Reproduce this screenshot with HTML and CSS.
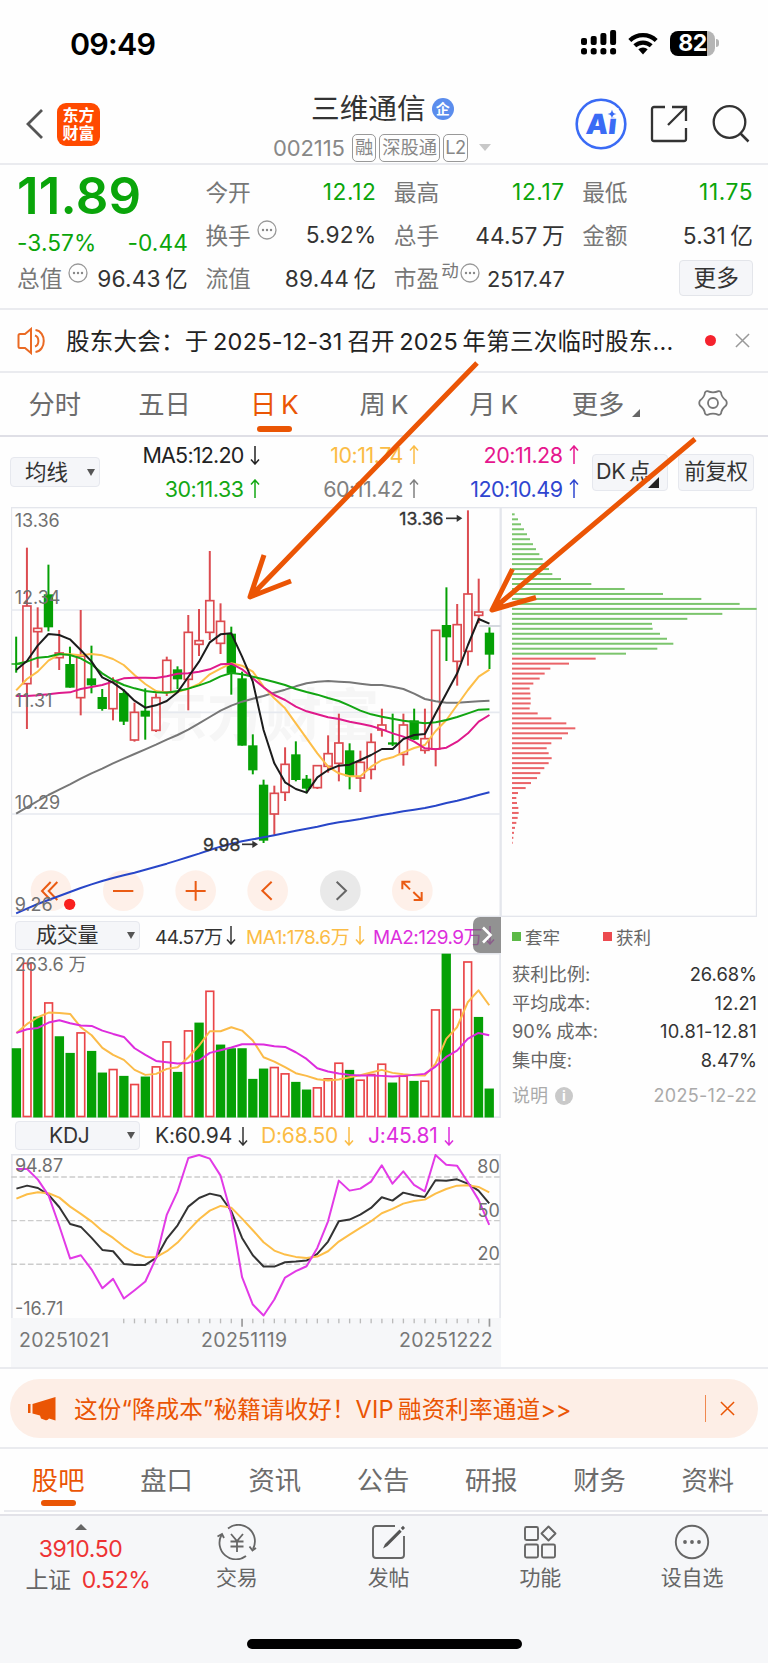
FILE: index.html
```html
<!DOCTYPE html>
<html lang="zh-CN">

<head>
    <meta charset="UTF-8">
    <meta name="viewport" content="width=device-width, initial-scale=1.0">
    <title>三维通信 002115</title>
    <link rel="stylesheet" href="styles.css">
</head>

<body>

    <!-- Shared icons -->
    <svg class="defs" width="0" height="0">
        <symbol id="down" viewBox="0 0 10 20"><path d="M5 1v18M1 14.500l4 4.500 4-4.500" fill="none" stroke="currentColor" stroke-width="1.500"/></symbol>
        <symbol id="up" viewBox="0 0 10 20"><path d="M5 19V1M1 5.500l4-4.500 4 4.500" fill="none" stroke="currentColor" stroke-width="1.500"/></symbol>
        <symbol id="more" viewBox="0 0 20 20"><circle cx="10" cy="10" r="9" fill="none" stroke="#999" stroke-width="1.300"/><g fill="#888"><circle cx="6" cy="10" r="1.200"/><circle cx="10" cy="10" r="1.200"/><circle cx="14" cy="10" r="1.200"/></g></symbol>
        <symbol id="close" viewBox="0 0 16 16"><path d="M1 1l14 14M15 1L1 15" fill="none" stroke="currentColor" stroke-width="1.600"/></symbol>
    </svg>

    <div class="page">

        <!-- Status bar -->
        <div class="status">
            <span class="time">09:49</span>
            <div class="status-icons">
                <svg width="36" height="26" viewBox="0 0 36 26">
                    <rect x="0" y="8" width="6" height="7" rx="2"/>
                    <rect x="9.700" y="6" width="6" height="9" rx="2"/>
                    <rect x="19.400" y="3" width="6" height="12" rx="2"/>
                    <rect x="29.100" y="0" width="6" height="15" rx="2"/>
                    <rect x="0" y="18" width="6" height="6.500" rx="2.500"/>
                    <rect x="9.700" y="18" width="6" height="6.500" rx="2.500"/>
                    <rect x="19.400" y="18" width="6" height="6.500" rx="2.500"/>
                    <rect x="29.100" y="18" width="6" height="6.500" rx="2.500"/>
                </svg>
                <svg class="wifi" width="30" height="23" viewBox="0 0 30 23">
                    <g fill="none" stroke="#000" stroke-width="4.200">
                        <path d="M1.800 8.500a19 19 0 0 1 26.400 0"/>
                        <path d="M6.800 13.800a12 12 0 0 1 16.400 0"/>
                    </g>
                    <path d="M10.300 17.200a7 7 0 0 1 9.400 0L15 22.500z"/>
                </svg>
                <div class="battery"><span>82</span></div>
            </div>
        </div>

        <!-- Title bar -->
        <header class="header">
            <div class="header-left">
                <svg width="19" height="32" viewBox="0 0 19 32"><path d="M17 2L3 16l14 14" fill="none" stroke="#555" stroke-width="2.800"/></svg>
                <div class="logo">东方<br>财富</div>
            </div>
            <div class="header-title">
                <h1>三维通信<span class="badge">企</span></h1>
                <div class="code">
                    <span class="num">002115</span><span class="tag">融</span><span class="tag">深股通</span><span class="tag">L2</span><i class="caret"></i>
                </div>
            </div>
            <div class="header-right">
                <svg width="52" height="52" viewBox="0 0 52 52">
                    <circle cx="26" cy="26" r="24.300" fill="none" stroke="#3a6bf5" stroke-width="2.600"/>
                    <text x="14" y="36" class="ai" transform="skewX(-6)">Ai</text>
                    <rect x="31.500" y="10" width="12" height="9" fill="#fff"/>
                    <path d="M37 11.500c.8 3.200 1.600 3.900 4.500 4.500-2.900.6-3.700 1.300-4.500 4.500-.8-3.200-1.600-3.900-4.500-4.500 2.900-.6 3.700-1.300 4.500-4.500z" fill="#3a6bf5"/>
                </svg>
                <svg class="share" width="38" height="38" viewBox="0 0 38 38"><path d="M15 2H4a2 2 0 0 0-2 2v30a2 2 0 0 0 2 2h30a2 2 0 0 0 2-2V23M22 2h14v14M36 2L18 20" fill="none" stroke="#333" stroke-width="2.300"/></svg>
                <svg class="search" width="38" height="38" viewBox="0 0 38 38"><circle cx="17.500" cy="17" r="15.800" fill="none" stroke="#333" stroke-width="2.300"/><path d="M28 28l8.500 8.500" stroke="#333" stroke-width="2.500"/></svg>
            </div>
        </header>

        <!-- Quote -->
        <section class="quote">
            <div class="quote-main">
                <div class="price">11.89</div>
                <div class="change"><span>-3.57%</span><span>-0.44</span></div>
                <div class="cell"><label>总值<svg class="info"><use href="#more"/></svg></label><b>96.43&thinsp;亿</b></div>
            </div>
            <div class="quote-col">
                <div class="cell"><label>今开</label><b class="green">12.12</b></div>
                <div class="cell"><label>换手<svg class="info"><use href="#more"/></svg></label><b>5.92%</b></div>
                <div class="cell"><label>流值</label><b>89.44&thinsp;亿</b></div>
            </div>
            <div class="quote-col">
                <div class="cell"><label>最高</label><b class="green">12.17</b></div>
                <div class="cell"><label>总手</label><b>44.57&thinsp;万</b></div>
                <div class="cell pe"><label>市盈<sup>动</sup><svg class="info"><use href="#more"/></svg></label><b>2517.47</b></div>
            </div>
            <div class="quote-col">
                <div class="cell"><label>最低</label><b class="green">11.75</b></div>
                <div class="cell"><label>金额</label><b>5.31&thinsp;亿</b></div>
                <div class="cell"><button class="btn-more">更多</button></div>
            </div>
        </section>

        <!-- News line -->
        <section class="news">
            <svg width="31" height="28" viewBox="0 0 31 28"><g fill="none" stroke="#ea6a24" stroke-width="2"><path d="M14 2v24l-6-5H3a1.500 1.500 0 0 1-1.500-1.500v-11A1.500 1.500 0 0 1 3 7h5z"/><path d="M18 8.500c4.500 1.500 4.500 9.500 0 11M18.500 3c11 1.500 11 20.500 0 22"/></g></svg>
            <p>股东大会：于&thinsp;2025-12-31&thinsp;召开&thinsp;2025&thinsp;年第三次临时股东...</p>
            <i class="dot"></i>
            <svg class="x" width="15" height="15"><use href="#close"/></svg>
        </section>

        <!-- Period tabs -->
        <nav class="tabs">
            <span>分时</span>
            <span>五日</span>
            <span class="active">日&thinsp;K</span>
            <span>周&thinsp;K</span>
            <span>月&thinsp;K</span>
            <span>更多<i class="corner"></i></span>
            <span><svg width="30" height="28" viewBox="0 0 30 28"><path d="M9.500 2.200Q15 4.500 20.500 2.200Q22 1.800 23 3.500Q23.500 8 28 11.500Q29.500 14 28 16.500Q23.500 20 23 24.500Q22 26.200 20.500 25.800Q15 23.500 9.500 25.800Q8 26.200 7 24.500Q6.500 20 2 16.500Q.5 14 2 11.500Q6.500 8 7 3.500Q8 1.800 9.500 2.200z" fill="none" stroke="#777" stroke-width="1.800"/><circle cx="15" cy="14" r="5" fill="none" stroke="#777" stroke-width="1.800"/></svg></span>
        </nav>

        <!-- Moving averages -->
        <section class="averages">
            <div class="select ma-select">均线<i></i></div>
            <div class="ma-grid">
                <span class="c-black">MA5:12.20<svg class="arr"><use href="#down"/></svg></span>
                <span class="c-orange">10:11.74<svg class="arr"><use href="#up"/></svg></span>
                <span class="c-pink">20:11.28<svg class="arr"><use href="#up"/></svg></span>
                <span class="c-green">30:11.33<svg class="arr"><use href="#up"/></svg></span>
                <span class="c-gray">60:11.42<svg class="arr"><use href="#up"/></svg></span>
                <span class="c-blue">120:10.49<svg class="arr"><use href="#up"/></svg></span>
            </div>
            <div class="pill dk">DK&thinsp;点<i></i></div>
            <div class="pill">前复权</div>
        </section>

        <!-- Charts -->
        <section class="charts">
            <div class="charts-left">
                <svg id="kline" class="kline" viewBox="33 21 1470 1230"></svg>

                <div class="indicator">
                    <div class="select">成交量<i></i></div>
                    <span class="v1">44.57万<svg class="arr"><use href="#down"/></svg></span>
                    <span class="v2 c-orange">MA1:178.6万<svg class="arr"><use href="#down"/></svg></span>
                    <span class="v3 c-purple">MA2:129.9万<svg class="arr"><use href="#down"/></svg></span>
                    <div class="toggle"><svg width="12" height="18" viewBox="0 0 12 18"><path d="M2 1.500L9.500 9 2 16.500" fill="none" stroke="#fff" stroke-width="2.600"/></svg></div>
                </div>
                <svg id="volume" class="sub-chart" viewBox="33 127 1470 494"></svg>

                <div class="indicator kdj-line">
                    <div class="select">KDJ<i></i></div>
                    <span class="k1">K:60.94<svg class="arr"><use href="#down"/></svg></span>
                    <span class="k2 c-orange">D:68.50<svg class="arr"><use href="#down"/></svg></span>
                    <span class="k3 c-purple">J:45.81<svg class="arr"><use href="#down"/></svg></span>
                </div>
                <svg id="kdj" class="sub-chart" viewBox="33 128 1470 494"></svg>

                <div class="axis">
                    <svg id="ticks" viewBox="33 622 1470 30"></svg>
                    <div class="dates"><span>20251021</span><span>20251119</span><span>20251222</span></div>
                </div>
            </div>

            <div class="charts-right">
                <svg id="chips" class="chips" viewBox="3 21 768 1230"></svg>
                <div class="legend"><span><i class="sq-green"></i>套牢</span><span><i class="sq-red"></i>获利</span></div>
                <dl>
                    <dt>获利比例:</dt><dd>26.68%</dd>
                    <dt>平均成本:</dt><dd>12.21</dd>
                    <dt>90%&thinsp;成本:</dt><dd class="range">10.81-12.81</dd>
                    <dt>集中度:</dt><dd>8.47%</dd>
                </dl>
                <div class="note"><span>说明<i>i</i></span><span class="date">2025-12-22</span></div>
            </div>
        </section>

        <!-- Promo -->
        <section class="promo-wrap">
            <div class="promo">
                <svg width="28" height="24" viewBox="0 0 28 24"><path d="M0 7h2.500v9H0zM4.500 7L27.500 0v23.500L21 21.500q-1.500 2.500-4 1.500l-4-1.500-1-3-7.500-2z" fill="#ea5504"/></svg>
                <p>这份“降成本”秘籍请收好！VIP&thinsp;融资利率通道&gt;&gt;</p>
                <div class="promo-close"><svg width="15" height="15"><use href="#close"/></svg></div>
            </div>
        </section>

        <!-- Content tabs -->
        <nav class="tabs content-tabs">
            <span class="active">股吧</span>
            <span>盘口</span>
            <span>资讯</span>
            <span>公告</span>
            <span>研报</span>
            <span>财务</span>
            <span>资料</span>
        </nav>

        <!-- Bottom bar -->
        <footer class="bottom">
            <div class="bottom-row">
                <div class="index">
                    <i></i>
                    <span class="red">3910.50</span>
                    <span class="sh">上证<em class="red">0.52%</em></span>
                </div>
                <div class="item">
                    <svg width="40" height="36" viewBox="0 0 40 36"><g fill="none" stroke="#666" stroke-width="1.800"><path d="M11 4.500A16.500 16.500 0 0 1 36 25M29 32A16.500 16.500 0 0 1 4.500 11M.5 12.500L5 10l2 4M39 24l-3.500 2.500L32.500 22.500"/><path d="M14 10l6 7 6-7M13.500 17.500h13M13.500 22.500h13M20 17v11"/></g></svg>
                    <span>交易</span>
                </div>
                <div class="item">
                    <svg width="36" height="36" viewBox="0 0 36 36"><path d="M24 2H5a3 3 0 0 0-3 3v26a3 3 0 0 0 3 3h25a3 3 0 0 0 3-3V12" fill="none" stroke="#666" stroke-width="1.900"/><path d="M12 24.500L14 20 28.500 5.500l2.200 2.200L16.500 22zM29.800 4l2.200-2.200 2 2.200-2.200 2.200z" fill="#555"/></svg>
                    <span>发帖</span>
                </div>
                <div class="item">
                    <svg width="34" height="34" viewBox="0 0 34 34"><g fill="none" stroke="#666" stroke-width="1.900"><rect x="2" y="2" width="13" height="13" rx="1.500"/><rect x="2" y="19.500" width="13" height="13" rx="1.500"/><rect x="19" y="19.500" width="13" height="13" rx="1.500"/><path d="M25.500 1.500l7 7-7 7-7-7z" stroke-linejoin="round"/></g></svg>
                    <span>功能</span>
                </div>
                <div class="item">
                    <svg width="36" height="36" viewBox="0 0 36 36"><circle cx="18" cy="18" r="16.200" fill="none" stroke="#666" stroke-width="1.900"/><g fill="#666"><circle cx="11" cy="18" r="1.900"/><circle cx="18" cy="18" r="1.900"/><circle cx="25" cy="18" r="1.900"/></g></svg>
                    <span>设自选</span>
                </div>
            </div>
            <div class="home"></div>
        </footer>

        <!-- Hand drawn arrows over the chart -->
        <svg class="marks" width="768" height="1663" viewBox="0 0 768 1663">
            <g fill="none" stroke="#eb5505" stroke-width="5" stroke-linejoin="round">
                <path d="M477 363L250 597M264 555L250 597L291 581"/>
                <path d="M695 439L492 610M512.500 569L492 610L536 597.500"/>
            </g>
        </svg>
    </div>

    <script src="chart.js"></script>
</body>

</html>
```
FILE: styles.css
```css
/* Reset CSS */
* {
    margin: 0;
    padding: 0;
    box-sizing: border-box;
}

:root {
    --green: #0aa50a;
    --red: #ee3333;
    --orange: #ea5504;
    --text: #333;
    --label: #777;
    --line: #eaebef;
}

body {
    font-family: Inter, "Noto Sans CJK SC", sans-serif;
    background: #fefefe;
    color: var(--text);
}

svg {
    display: block;
    flex: none;
}

i,
em {
    font-style: normal;
}

b {
    font-weight: 400;
}

.defs {
    position: absolute;
}

.page {
    position: relative;
    width: 768px;
    height: 1663px;
    display: flex;
    flex-direction: column;
    overflow: hidden;
}

.page > * {
    flex: none;
}

.marks {
    position: absolute;
    left: 0;
    top: 0;
    pointer-events: none;
}

/* Status bar */
.status {
    height: 86px;
    padding: 0 48px 0 70px;
    display: flex;
    justify-content: space-between;
    align-items: center;
}

.time {
    font-size: 30.5px;
    font-weight: 600;
    letter-spacing: -0.8px;
    color: #000;
}

.status-icons {
    display: flex;
    align-items: center;
    gap: 11px;
}

.battery {
    display: flex;
    align-items: center;
    justify-content: center;
    width: 45px;
    height: 25px;
    border-radius: 8px;
    background: linear-gradient(90deg, #000 82%, #b5b5b5 82%);
    margin-right: 5px;
    margin-left: 1px;
    color: #fff;
    font-size: 23px;
    font-weight: 700;
    letter-spacing: -0.5px;
}

.battery::after {
    content: '';
    position: absolute;
    width: 3px;
    height: 8px;
    border-radius: 0 3px 3px 0;
    background: #b5b5b5;
    transform: translateX(25px);
}

/* Title bar */
.header {
    height: 79px;
    border-bottom: 2px solid var(--line);
    display: grid;
    grid-template-columns: 240px 1fr 220px;
}

.header-left {
    display: flex;
    align-items: center;
    gap: 13px;
    padding-left: 25px;
    height: 76px;
}

.logo {
    width: 43px;
    height: 43px;
    border-radius: 9px;
    background: #ff4a00;
    color: #fff;
    font-size: 16px;
    line-height: 18px;
    font-weight: 700;
    text-align: center;
    padding-top: 3px;
}

.header-title h1 {
    display: flex;
    align-items: center;
    font-size: 28.7px;
    font-weight: 400;
    line-height: 46px;
    height: 45px;
    padding-left: 71px;
}

.badge {
    width: 22px;
    height: 22px;
    border-radius: 50%;
    background: #5b8ded;
    color: #fff;
    font-size: 14px;
    font-weight: 700;
    line-height: 21px;
    text-align: center;
    margin-left: 6px;
}

.code {
    display: flex;
    align-items: center;
    padding-left: 33px;
    height: 33px;
    font-size: 22px;
    color: #888;
}

.code .num {
    width: 79px;
    letter-spacing: -0.1px;
}

.tag {
    height: 28px;
    border: 1.5px solid #999;
    border-radius: 5px;
    padding: 0 2px;
    margin-right: 3px;
    font-size: 18.3px;
    line-height: 25px;
}

.tag:nth-child(4) {
    padding: 0 1px;
    letter-spacing: -0.5px;
}

.caret {
    border: 6px solid transparent;
    border-top: 7px solid #c8c8c8;
    border-bottom: 0;
    margin-left: 8px;
}

.header-right {
    display: flex;
    align-items: center;
    height: 76px;
    padding-left: 27px;
}

.share {
    margin-left: 23px;
}

.search {
    margin-left: 24px;
}

.ai {
    font: 900 28px Inter, sans-serif;
    fill: #3a6bf5;
}

/* Quote */
.quote {
    height: 145px;
    border-bottom: 2px solid var(--line);
    display: grid;
    grid-template-columns: repeat(4, 171px);
    column-gap: 17.4px;
    padding: 6px 0 0 17px;
}

.cell {
    display: flex;
    justify-content: space-between;
    align-items: center;
    height: 43px;
    padding-bottom: 2px;
    font-size: 22.7px;
    white-space: nowrap;
}

.cell label {
    display: flex;
    align-items: center;
    color: var(--label);
}

.cell b {
    letter-spacing: 0.2px;
}

.cell b.green {
    letter-spacing: 0.6px;
}

.info {
    width: 20px;
    height: 20px;
    margin: -9px 0 0 6px;
}

.pe .info {
    margin-left: 1px;
}

.cell.pe b {
    font-size: 21.8px;
    letter-spacing: 0;
    padding-top: 2px;
}

.pe sup {
    font-size: 17.5px;
    line-height: 17px;
    margin: -15px 0 0 2px;
}

.green,
.change,
.price {
    color: var(--green);
}

.price {
    font-size: 51px;
    font-weight: 600;
    line-height: 50px;
    letter-spacing: 0.2px;
}

.change {
    display: flex;
    justify-content: space-between;
    height: 36px;
    padding-top: 8px;
    font-size: 22.7px;
    letter-spacing: 0.1px;
}

.btn-more {
    width: 74px;
    height: 36px;
    margin-left: auto;
    border: 1.5px solid #e3e5ea;
    border-radius: 4px;
    background: #f5f6f9;
    font: inherit;
    line-height: 30px;
    color: #333;
}

/* News line */
.news {
    height: 63px;
    border-bottom: 2px solid var(--line);
    display: flex;
    align-items: center;
    padding: 0 18px 0 17px;
}

.news p {
    width: 640px;
    margin-left: 18px;
    padding-bottom: 2px;
    font-size: 23.5px;
    letter-spacing: 0.25px;
    color: #222;
    white-space: nowrap;
}

.dot {
    width: 11px;
    height: 11px;
    border-radius: 50%;
    background: #f5222d;
    margin-left: -1px;
}

.x {
    color: #999;
    margin-left: auto;
}

/* Tabs */
.tabs {
    height: 64px;
    border-bottom: 2px solid #dfdfe6;
    display: grid;
    grid-template-columns: repeat(7, 1fr);
    font-size: 26.3px;
    color: #6c6c6c;
}

.tabs span {
    display: flex;
    align-items: center;
    justify-content: center;
    position: relative;
    padding-bottom: 3px;
}

.tabs .active {
    color: var(--orange);
}

.tabs .active::after {
    content: '';
    position: absolute;
    bottom: 3px;
    width: 35px;
    height: 6px;
    border-radius: 3px;
    background: var(--orange);
}

.corner {
    border-left: 8px solid transparent;
    border-bottom: 8px solid #666;
    margin: 20px -5px 0 8px;
}

/* Moving averages */
.averages {
    height: 70px;
    display: flex;
    align-items: center;
    padding-left: 10px;
}

.select,
.pill {
    border: 1.5px solid #e6e8ee;
    border-radius: 4px;
    background: #f5f6f9;
}

.select {
    display: flex;
    align-items: center;
    justify-content: space-between;
}

.select i {
    border: 4px solid transparent;
    border-top: 7px solid #555;
    border-bottom: 0;
    margin-right: 4px;
}

.ma-select {
    width: 90px;
    height: 30px;
    padding-left: 14px;
    font-size: 21.5px;
    line-height: 26px;
}

.ma-grid {
    width: 478px;
    display: grid;
    grid-template-columns: repeat(3, 159.5px);
    font-size: 21.5px;
    line-height: 34px;
    letter-spacing: -0.5px;
    white-space: nowrap;
}

.ma-grid span {
    display: flex;
    justify-content: flex-end;
    align-items: center;
}

.ma-grid .c-black {
    letter-spacing: -0.8px;
}

.arr {
    width: 10px;
    height: 20px;
    margin-left: 6px;
}

.pill {
    width: 76px;
    height: 37px;
    font-size: 21.5px;
    line-height: 32px;
    text-align: center;
    letter-spacing: -0.3px;
    white-space: nowrap;
    margin-left: 10px;
}

.dk {
    display: flex;
    margin-left: 14px;
    padding-left: 3px;
}

.dk i {
    border-left: 11px solid transparent;
    border-bottom: 11px solid #222;
    align-self: flex-end;
    margin: 0 0 2px -2px;
}

.c-black {
    color: #222;
}

.c-orange {
    color: #fbbc45;
}

.c-pink {
    color: #e6168e;
}

.c-green {
    color: #13a813;
}

.c-gray {
    color: #808080;
}

.c-blue {
    color: #2f45d0;
}

.c-purple {
    color: #dd2edd;
}

/* Charts */
.charts {
    height: 862px;
    padding-left: 11px;
    display: grid;
    grid-template-columns: 490px 256px;
    border-bottom: 2px solid var(--line);
}

.kline {
    width: 490px;
    height: 410px;
}

.sub-chart {
    width: 490px;
    height: 164.5px;
}

svg text {
    font-family: Inter, "Noto Sans CJK SC", sans-serif;
}

.frame {
    fill: none;
    stroke: #e4e6ec;
    stroke-width: 5;
}

.label {
    font-size: 54px;
    fill: #707070;
}

.peak {
    font-size: 53px;
    fill: #333;
    stroke: #333;
    stroke-width: 1;
}

.watermark {
    font-size: 172px;
    font-weight: 700;
    fill: #f6f6f6;
}

.indicator {
    height: 36px;
    display: flex;
    align-items: center;
    padding-left: 4px;
    font-size: 19px;
    letter-spacing: -0.2px;
    white-space: nowrap;
}

.indicator .select {
    width: 125px;
    height: 29px;
    padding-left: 20px;
    margin-right: 15px;
    font-size: 21px;
    line-height: 26px;
    flex: none;
}

.indicator span {
    display: flex;
    align-items: center;
    flex: none;
}

.v1 {
    width: 91px;
    letter-spacing: -0.5px;
}

.indicator .v1 .arr {
    margin-left: 4px;
}

.v2 {
    width: 127px;
    letter-spacing: -0.5px;
}

.v3 {
    width: 123px;
    letter-spacing: -0.5px;
}

.indicator .v3 .arr {
    margin-left: 3px;
}

.toggle {
    width: 28px;
    height: 36px;
    margin-left: -23px;
    border-radius: 7px 0 0 7px;
    background: rgba(110, 110, 110, 0.75);
    display: flex;
    align-items: center;
    justify-content: center;
    z-index: 1;
}

.kdj-line {
    font-size: 21px;
}

.kdj-line .select {
    padding-left: 33px;
}

.k1 {
    width: 106px;
}

.k2 {
    width: 107px;
}

.axis {
    height: 49px;
    background: #f6f7f9;
}

.axis svg {
    width: 490px;
    height: 10px;
}

.dates {
    display: flex;
    justify-content: space-between;
    padding: 0 8px 0 8px;
    font-size: 19.5px;
    line-height: 24px;
    letter-spacing: 0.3px;
    color: #777;
}

.dates span:nth-child(2) {
    margin-right: 20px;
}

.charts-right {
    color: #666;
    font-size: 18.3px;
}

.chips {
    width: 256px;
    height: 410px;
}

.legend {
    display: flex;
    height: 38px;
    align-items: center;
    padding-left: 11px;
    font-size: 17.5px;
}

.legend span {
    width: 91px;
    display: flex;
    align-items: center;
    gap: 4px;
}

.legend i {
    width: 9px;
    height: 9px;
}

.sq-green {
    background: #5cb947;
}

.sq-red {
    background: #ec4a4f;
}

.charts-right dl {
    display: grid;
    grid-template-columns: auto auto;
    line-height: 28.7px;
    padding: 5px 0 0 11px;
}

.charts-right dd {
    text-align: right;
    color: #333;
}

.charts-right .range {
    letter-spacing: 0.4px;
}

.note {
    display: flex;
    justify-content: space-between;
    align-items: center;
    padding: 7px 0 0 11px;
    line-height: 28px;
    color: #aaa;
    font-size: 18px;
}

.note span {
    display: flex;
    align-items: center;
}

.note .date {
    letter-spacing: 0.3px;
}

.note i {
    width: 18px;
    height: 18px;
    margin-left: 7px;
    border-radius: 50%;
    background: #c9c9c9;
    color: #fff;
    font-size: 14px;
    font-weight: 700;
    line-height: 18px;
    text-align: center;
}

/* Promo */
.promo-wrap {
    height: 80px;
    padding: 10px 10px 0;
    border-bottom: 2px solid var(--line);
}

.promo {
    height: 59px;
    border-radius: 30px;
    background: #fdeee6;
    color: var(--orange);
    display: flex;
    align-items: center;
    padding: 0 23px 0 18px;
}

.promo p {
    margin-left: 18px;
    padding-bottom: 2px;
    font-size: 23.6px;
    letter-spacing: 0.1px;
    white-space: nowrap;
}

.promo-close {
    margin-left: auto;
    height: 27px;
    display: flex;
    align-items: center;
    border-left: 1.5px solid #f0884f;
    padding-left: 14px;
}

/* Content tabs */
.content-tabs {
    height: 63px;
    margin: 0 6px 0 4px;
    border-bottom: 2px solid var(--line);
}

.content-tabs .active::after {
    bottom: 4px;
}

/* Bottom bar */
.bottom {
    flex: 1;
    margin-top: 2px;
    background: #f6f7f9;
    border-top: 2px solid #e2e2e8;
    display: flex;
    flex-direction: column;
    justify-content: space-between;
}

.bottom-row {
    display: grid;
    grid-template-columns: 161px repeat(4, 1fr);
    color: #666;
}

.index {
    display: flex;
    flex-direction: column;
    align-items: center;
    font-size: 23px;
    line-height: 31px;
    padding-top: 8px;
}

.index span {
    letter-spacing: -0.4px;
}

.index .sh {
    margin-left: 15px;
}

.index em {
    margin-left: 11px;
}

.index i {
    border: 6px solid transparent;
    border-bottom: 6px solid #666;
    border-top: 0;
    margin-bottom: 4px;
}

.red {
    color: var(--red);
}

.item {
    display: flex;
    flex-direction: column;
    align-items: center;
    font-size: 21px;
    padding-top: 8px;
}

.item svg {
    height: 36px;
}

.item span {
    line-height: 32px;
    margin-top: 2px;
}

.home {
    width: 275px;
    height: 10px;
    border-radius: 5px;
    background: #000;
    margin: 0 auto 14px;
}
```
FILE: chart.js
```js
// x of every trading day, all left charts share it
const STEP = 32.27;
const X0 = 48.5;
const GREEN = "#05a005";
const RED = "#dc4b50";

function x(i) {
    return X0 + i * STEP;
}

// [color, high, body top, body bottom, low]
const candles = [
    ["g", 410, 490, 494, 518], ["r", 143, 318, 551, 687], ["r", 322, 385, 395, 503], ["g", 194, 283, 382, 394], ["r", 390, 459, 473, 510],
    ["g", 440, 492, 563, 563], ["r", 330, 468, 593, 646], ["g", 437, 535, 556, 580], ["g", 567, 591, 627, 632], ["r", 532, 545, 626, 661],
    ["g", 568, 579, 665, 675], ["r", 608, 637, 720, 725], ["g", 565, 632, 650, 719], ["r", 580, 593, 691, 696], ["r", 470, 481, 576, 588],
    ["g", 499, 508, 538, 567], ["r", 345, 397, 538, 631], ["r", 327, 422, 433, 468], ["r", 153, 302, 397, 420], ["r", 310, 364, 430, 462],
    ["g", 380, 401, 520, 584], ["g", 515, 535, 737, 737], ["g", 703, 736, 811, 823], ["g", 839, 854, 1022, 1029], ["r", 857, 880, 942, 1006],
    ["r", 742, 793, 877, 903], ["g", 724, 763, 840, 844], ["g", 825, 836, 866, 880], ["r", 797, 797, 863, 867], ["r", 706, 761, 799, 818],
    ["r", 641, 729, 790, 844], ["g", 730, 751, 829, 868], ["r", 752, 787, 834, 876], ["r", 700, 727, 808, 838], ["r", 626, 675, 690, 710],
    ["g", 641, 727, 734, 738], ["r", 641, 675, 763, 797], ["g", 626, 661, 719, 720], ["r", 626, 716, 751, 761], ["r", 391, 391, 747, 799],
    ["g", 262, 375, 412, 483], ["r", 312, 374, 484, 557], ["r", 31, 282, 454, 497], ["r", 236, 336, 346, 370], ["g", 382, 398, 464, 507]
];

const averages = {
    "#777777": [941, 922, 903, 885, 869, 853, 836, 820, 806, 790, 776, 762, 748, 734, 719, 705, 689, 670, 651, 632, 617, 605, 596, 588, 578, 569, 559, 550, 545, 543, 545, 547, 551, 555, 555, 560, 567, 581, 597, 604, 608, 608, 606, 604, 602],
    "#fdbe48": [571, 537, 515, 482, 463, 463, 466, 462, 466, 477, 495, 525, 552, 573, 578, 576, 566, 552, 523, 506, 490, 497, 515, 560, 595, 625, 670, 715, 760, 800, 820, 829, 829, 800, 780, 772, 757, 744, 735, 693, 660, 615, 570, 530, 509],
    "#df1a8b": [588, 588, 586, 583, 579, 577, 567, 561, 555, 545, 535, 533, 533, 534, 529, 521, 520, 515, 508, 493, 491, 508, 535, 562, 585, 600, 620, 634, 643, 652, 657, 665, 671, 678, 688, 700, 710, 725, 745, 748, 743, 725, 700, 665, 645],
    "#12a512": [492, 485, 473, 470, 462, 465, 475, 493, 520, 540, 555, 565, 573, 577, 578, 573, 566, 556, 545, 529, 519, 523, 530, 538, 546, 555, 567, 576, 584, 594, 603, 617, 632, 643, 650, 656, 662, 666, 670, 667, 660, 651, 640, 629, 628],
    "#2846c8": [1240, 1226, 1212, 1200, 1188, 1176, 1164, 1153, 1143, 1134, 1126, 1118, 1109, 1100, 1091, 1081, 1071, 1061, 1050, 1040, 1031, 1024, 1018, 1012, 1006, 999, 992, 986, 980, 973, 967, 962, 957, 951, 945, 940, 934, 929, 924, 917, 909, 902, 894, 885, 877],
    "#1c1c1c": [510, 483, 437, 402, 405, 418, 450, 484, 532, 548, 571, 602, 623, 616, 603, 577, 531, 485, 427, 403, 400, 470, 545, 690, 790, 847, 867, 878, 832, 810, 797, 794, 780, 765, 747, 747, 717, 705, 702, 640, 580, 520, 435, 357, 371]
};

// volume bar tops
const volumes = [
    "g413", "r158", "g318", "r277", "g377", "g427", "r367", "g421", "g486", "r477", "g496", "r522", "g498", "r469", "r394",
    "g484", "r361", "g336", "r242", "g402", "g413", "g413", "g505", "g474", "r471", "r490", "g514", "g537", "r532", "r505",
    "r458", "g478", "r509", "r492", "r461", "g516", "r497", "g511", "r512", "r298", "g129", "r297", "r154", "g319", "g534"
];

const volumeLines = {
    "#fbbb48": [367, 340, 320, 306, 307, 310, 350, 374, 412, 433, 448, 478, 493, 490, 475, 470, 440, 405, 362, 362, 350, 360, 390, 440, 453, 470, 488, 496, 506, 510, 507, 500, 494, 486, 478, 487, 491, 494, 495, 460, 385, 350, 275, 239, 284],
    "#dd2cdd": [367, 356, 352, 336, 329, 338, 345, 346, 360, 370, 379, 413, 433, 451, 455, 459, 457, 450, 427, 419, 411, 401, 401, 402, 407, 409, 425, 445, 473, 483, 489, 493, 495, 495, 496, 498, 496, 493, 490, 468, 439, 420, 385, 367, 374]
};

const kdjLines = {
    "#333333": [232, 223, 230, 251, 288, 338, 347, 380, 416, 420, 458, 461, 461, 440, 382, 342, 286, 260, 247, 254, 300, 380, 432, 466, 466, 453, 451, 448, 428, 391, 330, 325, 310, 290, 258, 268, 244, 252, 257, 207, 208, 204, 217, 238, 276],
    "#fdbe48": [262, 249, 243, 246, 259, 286, 308, 331, 359, 380, 406, 426, 437, 438, 420, 394, 358, 324, 298, 284, 289, 322, 357, 393, 418, 430, 437, 440, 436, 420, 391, 370, 350, 330, 306, 293, 277, 269, 265, 247, 233, 223, 222, 227, 243],
    "#e23ae6": [173, 173, 205, 253, 345, 442, 432, 475, 531, 503, 562, 537, 511, 440, 310, 240, 140, 131, 142, 193, 310, 498, 580, 613, 565, 499, 480, 465, 410, 330, 208, 238, 232, 211, 162, 217, 180, 221, 240, 131, 160, 163, 212, 265, 341]
};

// right ends of the chip distribution bars, top to bottom
const chips = [
    44, 54, 63, 72, 81, 90, 99, 108, 118, 128, 137, 147, 157, 183, 274, 374, 489, 604, 719, 770, 667, 562, 456, 458, 480, 501, 520, 472, 378,
    287, 207, 151, 134, 119, 100, 89, 91, 92, 92, 89, 113, 154, 199, 226, 204, 186, 154, 140, 146, 155, 146, 133, 121, 111, 93, 77, 54, 49, 51, 55, 56, 53, 49, 45, 42, 40, 38
];
const TRAPPED = 29;

function rect(x, y, w, h, attrs) {
    return `<rect x="${x}" y="${y}" width="${w}" height="${h}" ${attrs}/>`;
}

function line(x1, y1, x2, y2, color, width, extra = "") {
    return `<path d="M${x1} ${y1}L${x2} ${y2}" stroke="${color}" stroke-width="${width}" ${extra}/>`;
}

function label(x, y, text, cls = "label", extra = "") {
    return `<text x="${x}" y="${y}" class="${cls}" ${extra}>${text}</text>`;
}

function curves(set, width) {
    let out = "";
    for (const color in set) {
        const pts = set[color].map((y, i) => x(i) + "," + y).join(" ");
        out += `<polyline points="${pts}" fill="none" stroke="${color}" stroke-width="${width}" stroke-linejoin="round"/>`;
    }
    return out;
}

function drawKline() {
    let out = label(450, 708, "东方财富", "watermark");
    out += rect(34, 22.500, 1467, 1227, 'class="frame"');
    [330, 637, 942].forEach(y => out += line(33, y, 1503, y, "#e6e9ef", 5));

    [153, 370, 587, 803, 1021, 1237].forEach((cx, i) => {
        out += `<circle cx="${cx}" cy="1172" r="61" fill="${i === 4 ? "#e9e9e9" : "#fef0e9"}"/>`;
    });
    out += `<g fill="none" stroke="#ea5b13" stroke-width="6">
        <path d="M152 1146L126 1173L152 1200M172 1146L146 1173L172 1200"/>
        <path d="M339 1173H400M557 1173H617M587 1143V1202"/>
        <path d="M815 1145L787 1172L815 1199"/>
        <path d="M1207 1168V1145H1231M1208 1146L1230 1168M1241 1200H1265V1176M1240 1176L1264 1199"/>
    </g><path d="M1010 1145L1038 1172L1010 1199" fill="none" stroke="#666" stroke-width="6"/>`;

    candles.forEach(([c, high, top, bottom, low], i) => {
        const cx = x(i);
        if (c === "g") {
            out += line(cx, high, cx, low, GREEN, 6);
            out += rect(cx - 14, top, 28, bottom - top, `fill="${GREEN}"`);
        } else {
            out += line(cx, high, cx, top, RED, 6) + line(cx, bottom, cx, low, RED, 6);
            out += rect(cx - 12, top, 24, bottom - top, `fill="none" stroke="${RED}" stroke-width="5"`);
        }
    });

    out += line(1438, 378, 1502, 378, "#d5d8df", 6);
    out += curves(averages, 6);
    out += label(44, 80, "13.36") + label(44, 313, "12.34") + label(44, 620, "11.31") + label(44, 926, "10.29") + label(44, 1234, "9.26");
    out += label(1198, 74, "13.36", "peak") + label(609, 1053, "9.98", "peak");
    out += line(1338, 55, 1378, 55, "#333", 5) + '<path d="M1370 44L1387 55L1370 66z" fill="#333"/>';
    out += line(726, 1033, 762, 1033, "#333", 5) + '<path d="M757 1022L774 1033L757 1044z" fill="#333"/>';
    out += '<circle cx="209" cy="1213" r="17" fill="#f9201e"/>';
    document.getElementById("kline").innerHTML = out;
}

function drawVolume() {
    let out = rect(34, 129, 1467, 491, 'class="frame"');
    volumes.forEach((v, i) => {
        const top = Number(v.slice(1));
        if (v[0] === "g") {
            out += rect(x(i) - 14, top, 28, 621 - top, `fill="${GREEN}"`);
        } else {
            out += rect(x(i) - 11.500, top, 23, 618 - top, 'fill="#fff" stroke="#ea4548" stroke-width="5"');
        }
    });
    out += curves(volumeLines, 6);
    out += label(44, 181, "263.6 万");
    document.getElementById("volume").innerHTML = out;
}

function drawKdj() {
    let out = line(33, 130, 1503, 130, "#e4e6ec", 5) + line(35, 128, 35, 622, "#e4e6ec", 5) + line(1501, 128, 1501, 622, "#e4e6ec", 5);
    [197, 328, 459].forEach(y => out += line(33, y, 1503, y, "#cccccc", 4, 'stroke-dasharray="17 8"'));
    out += curves(kdjLines, 6);
    out += label(44, 182, "94.87") + label(44, 610, "-16.71");
    out += label(1500, 185, "80", "label", 'text-anchor="end"');
    out += label(1500, 317, "50", "label", 'text-anchor="end"');
    out += label(1500, 447, "20", "label", 'text-anchor="end"');
    document.getElementById("kdj").innerHTML = out;

    let ticks = "";
    for (let i = 10; i < 45; i++) {
        const big = i === 21 || i === 44;
        ticks += line(x(i), 624, x(i), big ? 648 : 638, big ? "#999" : "#bbb", big ? 5 : 4);
    }
    document.getElementById("ticks").innerHTML = ticks;
}

function drawChips() {
    let out = rect(3, 22.500, 767, 1227, 'class="frame"');
    chips.forEach((end, i) => {
        out += rect(36, 40 + i * 14.930, end - 36, 6, `fill="${i < TRAPPED ? "#7cc56d" : "#ea6468"}"`);
    });
    document.getElementById("chips").innerHTML = out;
}

drawKline();
drawVolume();
drawKdj();
drawChips();
```
